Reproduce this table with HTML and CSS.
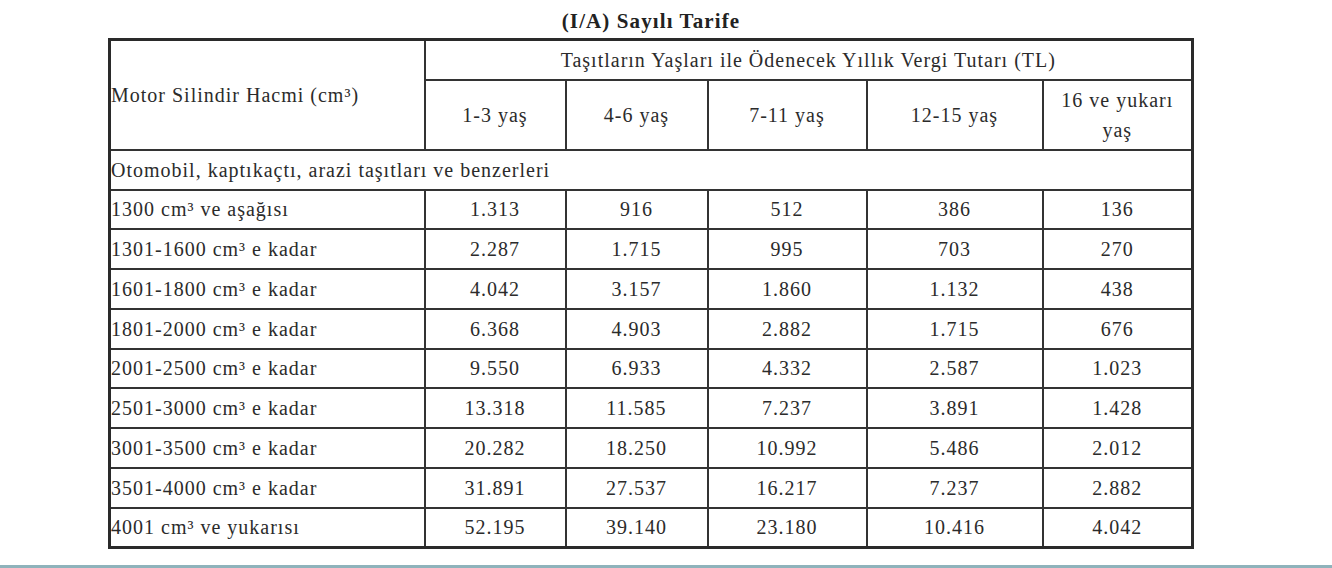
FILE: index.html
```html
<!DOCTYPE html>
<html lang="tr">
<head>
    <meta charset="UTF-8">
    <meta name="viewport" content="width=device-width, initial-scale=1.0">
    <title>(I/A) Sayılı Tarife</title>
    <link rel="stylesheet" href="styles.css">
</head>
<body>

    <div class="tarife">
        <h3 class="tarife-baslik">(I/A) Sayılı Tarife</h3>
        <table class="vergi-tablosu">
            <colgroup>
                <col class="c-hacim">
                <col class="c-1">
                <col class="c-2">
                <col class="c-3">
                <col class="c-4">
                <col class="c-5">
            </colgroup>
            <tr class="r-ust">
                <td rowspan="2" class="sol">Motor Silindir Hacmi (cm³)</td>
                <td colspan="5">Taşıtların Yaşları ile Ödenecek Yıllık Vergi Tutarı (TL)</td>
            </tr>
            <tr class="r-yas">
                <td>1-3 yaş</td>
                <td>4-6 yaş</td>
                <td>7-11 yaş</td>
                <td>12-15 yaş</td>
                <td>16 ve yukarı<br>yaş</td>
            </tr>
            <tr class="r-grup">
                <td colspan="6" class="sol">Otomobil, kaptıkaçtı, arazi taşıtları ve benzerleri</td>
            </tr>
            <tr><td class="sol">1300 cm³ ve aşağısı</td><td>1.313</td><td>916</td><td>512</td><td>386</td><td>136</td></tr>
            <tr><td class="sol">1301-1600 cm³ e kadar</td><td>2.287</td><td>1.715</td><td>995</td><td>703</td><td>270</td></tr>
            <tr><td class="sol">1601-1800 cm³ e kadar</td><td>4.042</td><td>3.157</td><td>1.860</td><td>1.132</td><td>438</td></tr>
            <tr><td class="sol">1801-2000 cm³ e kadar</td><td>6.368</td><td>4.903</td><td>2.882</td><td>1.715</td><td>676</td></tr>
            <tr><td class="sol">2001-2500 cm³ e kadar</td><td>9.550</td><td>6.933</td><td>4.332</td><td>2.587</td><td>1.023</td></tr>
            <tr><td class="sol">2501-3000 cm³ e kadar</td><td>13.318</td><td>11.585</td><td>7.237</td><td>3.891</td><td>1.428</td></tr>
            <tr><td class="sol">3001-3500 cm³ e kadar</td><td>20.282</td><td>18.250</td><td>10.992</td><td>5.486</td><td>2.012</td></tr>
            <tr><td class="sol">3501-4000 cm³ e kadar</td><td>31.891</td><td>27.537</td><td>16.217</td><td>7.237</td><td>2.882</td></tr>
            <tr><td class="sol">4001 cm³ ve yukarısı</td><td>52.195</td><td>39.140</td><td>23.180</td><td>10.416</td><td>4.042</td></tr>
        </table>
    </div>

    <!-- alt kenardaki ince şerit -->
    <div class="alt-serit"></div>

</body>
</html>
```

FILE: styles.css
```css
/* Sayfa */
body {
    margin: 0;
    height: 568px;
    background-color: #fff;
    font-family: "Liberation Serif", "Times New Roman", serif;
    color: #2b2b2b;
    display: flex;
    flex-direction: column;
    overflow: hidden;
}

.tarife {
    width: 1086px;
    margin-left: 108px;
}

.tarife-baslik {
    margin: 0;
    padding-top: 10px;
    height: 38px;
    box-sizing: border-box;
    text-align: center;
    font-size: 21px;
    line-height: 22px;
    letter-spacing: 1.1px;
    font-weight: bold;
    color: #222;
}

/* Tablo */
.vergi-tablosu {
    width: 1086px;
    border-collapse: collapse;
    table-layout: fixed;
    border: 3px solid #2a2a2a;
    font-size: 20px;
    letter-spacing: 1px;
}

.vergi-tablosu td {
    border: 2px solid #333;
    padding: 0;
    text-align: center;
    vertical-align: middle;
    line-height: 30px;
}

.vergi-tablosu td.sol {
    text-align: left;
    padding-left: 0;
}

.c-hacim { width: 315px; }
.c-1 { width: 141px; }
.c-2 { width: 142px; }
.c-3 { width: 159px; }
.c-4 { width: 176px; }
.c-5 { width: 150px; }

.vergi-tablosu tr { height: 39.75px; }
.vergi-tablosu .r-ust { height: 40px; }
.vergi-tablosu .r-yas { height: 70px; }
.vergi-tablosu .r-grup { height: 40px; }

/* alt şerit */
.alt-serit {
    margin-top: auto;
    height: 3px;
    background-color: #8fb3bb;
}
```
